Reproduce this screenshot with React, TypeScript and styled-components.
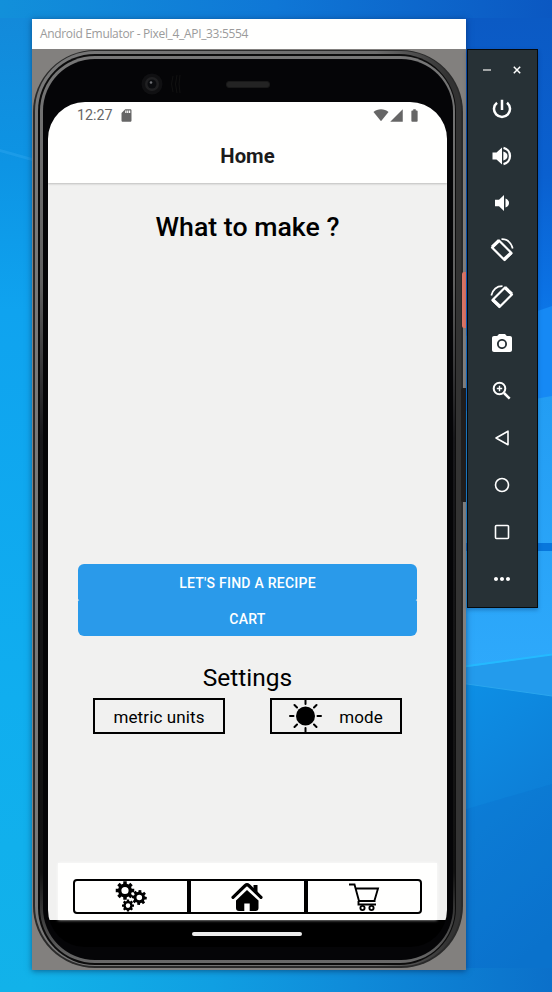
import React from "react";
import styled, { createGlobalStyle } from "styled-components";
import {
  MdPhotoCamera,
  MdMoreHoriz,
  MdSdCard,
  MdSignalCellular4Bar,
  MdBatteryFull,
} from "react-icons/md";

const GlobalStyle = createGlobalStyle`
  *, *::before, *::after { box-sizing: border-box; }
  body { margin: 0; font-family: Roboto, "Liberation Sans", sans-serif; }
  svg { display: block; flex: none; }
  button { font: inherit; margin: 0; padding: 0; }
`;

const Desktop = styled.div`
  position: relative;
  width: 552px;
  height: 992px;
  overflow: hidden;
  background: #0f84dc;
  display: flex;
  align-items: flex-start;
  padding: 19px 0 0 32px;
`;

const WallpaperArt = styled.svg`
  position: absolute;
  inset: 0;
`;

const EmulatorWindow = styled.section`
  position: relative;
  width: 434px;
  height: 951px;
  display: flex;
  flex-direction: column;
  box-shadow: 0 1px 6px rgba(0, 20, 60, 0.5);
`;

const TitleBar = styled.header`
  height: 30px;
  flex: none;
  background: #fffffe;
  color: #9b9b9b;
  font: 12px/30px "Open Sans", "Noto Sans", sans-serif;
  letter-spacing: -0.33px;
  padding-left: 8px;
  white-space: nowrap;
`;

const DeviceArea = styled.div`
  position: relative;
  flex: 1;
  background: #82807e;
  padding: 1px 3px 2px 1px;
  display: flex;
`;

const Bezel = styled.div<{ $pad: string; $radius: number; $bg: string }>`
  flex: 1;
  display: flex;
  padding: ${(p) => p.$pad};
  border-radius: ${(p) => p.$radius}px;
  background: ${(p) => p.$bg};
`;

const Glass = styled.div`
  flex: 1;
  display: flex;
  flex-direction: column;
  border-radius: 52px;
  background: #050507;
`;

const SensorStrip = styled.div`
  height: 43px;
  flex: none;
  display: flex;
  padding: 13px 0 0 98px;
  align-items: flex-start;
`;

const Speaker = styled.span`
  width: 44px;
  height: 7px;
  margin: 9px 0 0 43px;
  border-radius: 3px;
  background: #232323;
  border: 1px solid #191919;
`;

const Screen = styled.main`
  width: 399px;
  height: 845px;
  margin-left: 5px;
  border-radius: 37px;
  overflow: hidden;
  display: flex;
  flex-direction: column;
  background: #000;
`;

const AppHeader = styled.div`
  position: relative;
  height: 81px;
  flex: none;
  background: #fffffe;
  box-shadow: 0 1px 2px rgba(0, 0, 0, 0.22);
`;

const StatusBar = styled.div`
  height: 27px;
  display: flex;
  align-items: center;
  color: #666;
  font-size: 14.3px;
  padding: 0 25px 1px 29px;
`;

const StatusTime = styled.span`
  margin-right: 6px;
`;

const StatusRight = styled.div`
  margin-left: auto;
  display: flex;
  align-items: center;
`;

const BatterySlot = styled.span`
  margin-left: 3px;
`;

const HeaderTitle = styled.h1`
  margin: 0;
  height: 54px;
  text-align: center;
  font-size: 20.3px;
  line-height: 55px;
  font-weight: 700;
  color: #1b1b1c;
`;

const Page = styled.div`
  height: 737px;
  flex: none;
  display: flex;
  flex-direction: column;
  background: #f1f1f0;
`;

const Question = styled.h2`
  margin: 25px 0 0;
  height: 38px;
  font-size: 26.7px;
  line-height: 38px;
  font-weight: 500;
  text-align: center;
  color: #000;
`;

const ActionList = styled.div`
  margin: 318px 30px 0;
  display: flex;
  flex-direction: column;
`;

const ActionButton = styled.button<{ $edge: "top" | "bottom" }>`
  height: 36px;
  border: 0;
  border-radius: ${(p) => (p.$edge === "top" ? "6px 6px 1.5px 1.5px" : "1.5px 1.5px 6px 6px")};
  background: #2a9aea;
  color: #fff;
  font-size: 14px;
  font-weight: 500;
  letter-spacing: 0.24px;
  padding-top: ${(p) => (p.$edge === "top" ? 2 : 1)}px;
`;

const SettingsTitle = styled.h3`
  margin: 26px 0 0;
  height: 32px;
  line-height: 31px;
  font-size: 24.5px;
  font-weight: 400;
  text-align: center;
  color: #000;
`;

const SettingsRow = styled.div`
  display: flex;
  justify-content: space-between;
  margin: 4px 45px 0;
`;

const SettingButton = styled.button`
  width: 132px;
  height: 36px;
  border: 2px solid #000;
  background: transparent;
  color: #000;
  font-size: 17px;
  letter-spacing: 0.12px;
  padding-top: 1px;
  display: flex;
  align-items: center;
  justify-content: center;
  gap: 17px;

  svg {
    margin-top: -1px;
  }
`;

const TabPanel = styled.nav`
  margin: auto 10px 0;
  height: 57px;
  padding: 16px 15px 0;
  background: #fffffe;
  box-shadow: 0 0 3px rgba(255, 255, 255, 0.8);
  display: flex;
`;

const Tab = styled.button`
  flex: 1;
  height: 35px;
  border: 2px solid #000;
  background: #fffffe;
  display: flex;
  align-items: center;
  justify-content: center;

  &:first-child {
    border-radius: 4px 0 0 4px;
  }

  &:last-child {
    border-radius: 0 4px 4px 0;
  }
`;

const GestureBar = styled.div`
  flex: 1;
  display: flex;
  justify-content: center;
  padding: 12px 1px 0 0;
`;

const GesturePill = styled.span`
  width: 110px;
  height: 4px;
  border-radius: 2px;
  background: #ececec;
`;

const SideKey = styled.span<{ $top: number; $height: number; $color: string; $width: number }>`
  position: absolute;
  right: 0;
  top: ${(p) => p.$top}px;
  width: ${(p) => p.$width}px;
  height: ${(p) => p.$height}px;
  border-radius: 2px 0 0 2px;
  background: ${(p) => p.$color};
`;

const ControlPanel = styled.aside`
  position: relative;
  width: 71px;
  height: 559px;
  margin: 30px 0 0 1px;
  border: 1px solid #05090c;
  background: #273136;
  color: #fff;
  box-shadow: 0 2px 4px rgba(0, 30, 80, 0.3);
`;

const WindowButtons = styled.div`
  height: 35px;
  display: flex;
  align-items: center;
  justify-content: center;
  gap: 22px;
  padding: 5px 1px 0 0;
`;

const ControlList = styled.div`
  display: flex;
  flex-direction: column;
`;

const Control = styled.button`
  height: 47px;
  width: 67px;
  border: 0;
  background: transparent;
  color: #fff;
  display: flex;
  align-items: center;
  justify-content: center;
`;

function Wallpaper() {
  return (
    <WallpaperArt width="552" height="992" viewBox="0 0 552 992" aria-hidden="true">
      <defs>
        <linearGradient id="left" x1="0" y1="0" x2="0" y2="1">
          <stop offset="0" stopColor="#138ada" />
          <stop offset="0.15" stopColor="#0d94e4" />
          <stop offset="0.3" stopColor="#0fa3ef" />
          <stop offset="0.7" stopColor="#10aeef" />
          <stop offset="1" stopColor="#12b2e9" />
        </linearGradient>
        <linearGradient id="top" x1="0" y1="0" x2="1" y2="0">
          <stop offset="0" stopColor="#1290da" />
          <stop offset="0.5" stopColor="#0f77d6" />
          <stop offset="1" stopColor="#0b58c2" />
        </linearGradient>
        <linearGradient id="right" x1="0" y1="0" x2="0" y2="1">
          <stop offset="0" stopColor="#0b5ac4" />
          <stop offset="0.4" stopColor="#0a60cf" />
          <stop offset="0.7" stopColor="#0b72e4" />
          <stop offset="1" stopColor="#128af5" />
        </linearGradient>
        <linearGradient id="glow" x1="0" y1="0" x2="0" y2="1">
          <stop offset="0" stopColor="#239df3" />
          <stop offset="1" stopColor="#2ea9fb" />
        </linearGradient>
        <linearGradient id="lower" x1="0" y1="0" x2="0.25" y2="1">
          <stop offset="0" stopColor="#0d90e6" />
          <stop offset="0.5" stopColor="#0d80d8" />
          <stop offset="1" stopColor="#0b75ce" />
        </linearGradient>
        <linearGradient id="bottom" x1="0" y1="0" x2="1" y2="0">
          <stop offset="0" stopColor="#12b3e9" />
          <stop offset="0.35" stopColor="#109fe2" />
          <stop offset="0.62" stopColor="#0f8bd9" />
          <stop offset="1" stopColor="#0b70ca" />
        </linearGradient>
      </defs>
      <rect width="552" height="50" fill="url(#top)" />
      <rect y="18" width="60" height="974" fill="url(#left)" />
      <path d="M0 149L32 158V161L0 152Z" fill="#36adf0" opacity="0.35" />
      <rect x="466" y="18" width="86" height="392" fill="url(#right)" />
      <path d="M460 338L552 306V420H460Z" fill="#1689f4" />
      <path d="M460 412L552 396V670H460Z" fill="url(#glow)" />
      <rect x="460" y="543" width="92" height="8" fill="#0877dc" />
      <path d="M460 668L552 655V700H460Z" fill="#239bec" />
      <path d="M460 667L552 654.500" stroke="#24baff" strokeWidth="2" />
      <path d="M460 683L552 696V992H460Z" fill="url(#lower)" />
      <path d="M460 683L552 696" stroke="#2ba6ee" strokeWidth="1" />
      <path d="M460 811L552 784V970H460Z" fill="#0867c8" opacity="0.22" />
      <rect x="30" y="968" width="522" height="24" fill="url(#bottom)" />
    </WallpaperArt>
  );
}

function Camera() {
  return (
    <svg width="42" height="24" viewBox="0 0 42 24">
      <circle cx="11" cy="12" r="10.500" fill="#101012" />
      <circle cx="11" cy="12" r="7" fill="#202022" />
      <circle cx="11" cy="12" r="4.500" fill="#0b0c0f" />
      <circle cx="10" cy="10.500" r="1.300" fill="#707276" />
      <path d="M32 4Q29 12 32 20M36 3Q33 12 36 21M39 3Q37 12 39 21" fill="none" stroke="#111" />
    </svg>
  );
}

function WifiIcon() {
  return (
    <svg width="16" height="14" viewBox="0 0 16 14" fill="#666">
      <path d="M8 13.300L0.500 4C4.500 0.300 11.500 0.300 15.500 4Z" />
    </svg>
  );
}

function gearPath(cx: number, cy: number, outer: number, root: number, hole: number, teeth: number, turn: number) {
  const points: string[] = [];
  const step = (Math.PI * 2) / teeth;
  for (let i = 0; i < teeth; i++) {
    const base = turn + i * step;
    const corners: [number, number][] = [
      [-0.33, root],
      [-0.23, outer],
      [0.23, outer],
      [0.33, root],
    ];
    corners.forEach(([f, r]) => {
      const a = base + f * step;
      points.push(`${(cx + r * Math.cos(a)).toFixed(2)} ${(cy + r * Math.sin(a)).toFixed(2)}`);
    });
  }
  return `M${points.join("L")}ZM${cx - hole} ${cy}a${hole} ${hole} 0 1 0 ${hole * 2} 0a${hole} ${hole} 0 1 0 ${-hole * 2} 0Z`;
}

function GearsIcon() {
  return (
    <svg width="32" height="31" viewBox="0 0 32 31" fillRule="evenodd">
      <path d={gearPath(10, 9.5, 9.4, 7, 3.6, 8, 0)} />
      <path d={gearPath(24.3, 16.5, 7.6, 5.7, 2.8, 8, 0.1)} />
      <path d={gearPath(13, 24.6, 6.1, 4.7, 2.3, 8, 0)} />
    </svg>
  );
}

function HouseIcon() {
  return (
    <svg width="32" height="30" viewBox="0 0 32 30">
      <path d="M2 15.300L14.200 3.500Q16 2 17.800 3.500L30 15.300" fill="none" stroke="#000" strokeWidth="3.200" strokeLinecap="round" />
      <path d="M22.500 3H26.500V11L22.500 7Z" />
      <path d="M16 8L27.500 18.500V26Q27.500 29 24.500 29H18.700V21.500H13.300V29H8Q5 29 5 26V18.500Z" />
    </svg>
  );
}

function CartIcon() {
  return (
    <svg width="32" height="30" viewBox="0 0 32 30" fill="none" stroke="#000" strokeWidth="1.900">
      <path d="M1 2.500H6.500L11 19M7.300 6.500H30L26.500 18.500M10 19H27.500M10.500 19V22.500H28" />
      <circle cx="14.500" cy="26" r="2.100" />
      <circle cx="23.500" cy="26" r="2.100" />
    </svg>
  );
}

function SunIcon() {
  return (
    <svg width="33" height="32" viewBox="0 0 33 32" stroke="#000" strokeWidth="2" strokeLinecap="round">
      <circle cx="16.500" cy="16" r="9.500" stroke="none" />
      <path d="M16.500 0.500V4M16.500 28V31.500M1 16H4.500M28.500 16H32M5.500 5L8 7.500M27.500 5L25 7.500M5.500 27L8 24.500M27.500 27L25 24.500" />
    </svg>
  );
}

function PowerIcon() {
  return (
    <svg width="24" height="24" viewBox="0 0 24 24" fill="none" stroke="#fff" strokeWidth="2.500">
      <path d="M12 2.700V13M7 5.700A8 8 0 1 0 17 5.700" />
    </svg>
  );
}

function VolumeIcon({ loud = false }: { loud?: boolean }) {
  return (
    <svg width="24" height="24" viewBox="0 0 24 24" fill="#fff">
      {loud ? (
        <>
          <path d="M2.500 8.500H6.500L12 3.500V20.500L6.500 15.500H2.500Z" />
          <path d="M13.300 7.500Q17.500 8.800 17.500 12T13.300 16.500Z" />
          <path d="M13.500 3.900A8.300 8.300 0 0 1 13.500 20.100" fill="none" stroke="#fff" strokeWidth="2.300" />
        </>
      ) : (
        <>
          <path d="M5 8.800H9L14 4V20L9 15.200H5Z" />
          <path d="M15.500 7.500Q19 9 19 12T15.500 16.500Z" />
        </>
      )}
    </svg>
  );
}

function ZoomIcon() {
  return (
    <svg width="24" height="24" viewBox="0 0 24 24" fill="none" stroke="#fff">
      <circle cx="9.500" cy="9.500" r="5.800" strokeWidth="2" />
      <path d="M14 14L19.700 19.700" strokeWidth="2.500" />
      <path d="M9.500 6.800V12.200M6.800 9.500H12.200" strokeWidth="1.400" />
    </svg>
  );
}

function RotateIcon({ right = false }: { right?: boolean }) {
  return (
    <svg width="26" height="26" viewBox="0 0 26 26" fill="none" stroke="#fff">
      <g transform={right ? "translate(26 0) scale(-1 1)" : undefined}>
        <path d="M10 3.500L22.500 16L15.500 23L3 10.500Z" strokeWidth="2.200" strokeLinejoin="round" />
        <path d="M3.200 10L10 3.500M15 22.500L22.500 15.500" strokeWidth="3.200" />
        <path d="M12.500 2.200Q21 2 23.700 11.500" strokeWidth="1.700" />
      </g>
    </svg>
  );
}

function NavShape({ shape }: { shape: "back" | "home" | "recent" }) {
  return (
    <svg width="18" height="18" viewBox="0 0 18 18" fill="none" stroke="#fff" strokeWidth="1.600">
      {shape === "back" && <path d="M15 2.200V15.800L3 9Z" strokeLinejoin="round" />}
      {shape === "home" && <circle cx="9" cy="9" r="6.500" />}
      {shape === "recent" && <rect x="2.500" y="2.500" width="13" height="13" rx="1" />}
    </svg>
  );
}

const controls: { label: string; icon: React.ReactNode }[] = [
  { label: "Power", icon: <PowerIcon /> },
  { label: "Volume up", icon: <VolumeIcon loud /> },
  { label: "Volume down", icon: <VolumeIcon /> },
  { label: "Rotate left", icon: <RotateIcon /> },
  { label: "Rotate right", icon: <RotateIcon right /> },
  { label: "Screenshot", icon: <MdPhotoCamera size={24} /> },
  { label: "Zoom", icon: <ZoomIcon /> },
  { label: "Back", icon: <NavShape shape="back" /> },
  { label: "Home", icon: <NavShape shape="home" /> },
  { label: "Overview", icon: <NavShape shape="recent" /> },
  { label: "More", icon: <MdMoreHoriz size={24} /> },
];

function PhoneScreen() {
  return (
    <Screen>
      <AppHeader>
        <StatusBar>
          <StatusTime>12:27</StatusTime>
          <MdSdCard size={15} />
          <StatusRight>
            <WifiIcon />
            <MdSignalCellular4Bar size={15} />
            <BatterySlot>
              <MdBatteryFull size={15} />
            </BatterySlot>
          </StatusRight>
        </StatusBar>
        <HeaderTitle>Home</HeaderTitle>
      </AppHeader>
      <Page>
        <Question>What to make ?</Question>
        <ActionList>
          <ActionButton $edge="top">LET'S FIND A RECIPE</ActionButton>
          <ActionButton $edge="bottom">CART</ActionButton>
        </ActionList>
        <SettingsTitle>Settings</SettingsTitle>
        <SettingsRow>
          <SettingButton>metric units</SettingButton>
          <SettingButton>
            <SunIcon />
            mode
          </SettingButton>
        </SettingsRow>
        <TabPanel>
          <Tab aria-label="Settings"><GearsIcon /></Tab>
          <Tab aria-label="Home"><HouseIcon /></Tab>
          <Tab aria-label="Cart"><CartIcon /></Tab>
        </TabPanel>
      </Page>
      <GestureBar>
        <GesturePill />
      </GestureBar>
    </Screen>
  );
}

export default function App() {
  return (
    <>
      <GlobalStyle />
      <Desktop>
        <Wallpaper />
        <EmulatorWindow>
          <TitleBar>Android Emulator - Pixel_4_API_33:5554</TitleBar>
          <DeviceArea>
            <Bezel $pad="1px 2px 2px 2px" $radius={62} $bg="#2a2a2a">
              <Bezel $pad="3px 5px 1px 3px" $radius={60} $bg="linear-gradient(90deg, #787878 0%, #6c6c6c 80%, #333 97%)">
                <Bezel $pad="2px 1px 2px 2px" $radius={57} $bg="#0c0c0c">
                  <Bezel $pad="3px 2px 3px 3px" $radius={55} $bg="linear-gradient(180deg, #777 0%, #606060 25%, #17171a 42%, #111 90%, #6a6a6a 100%)">
                    <Glass>
                      <SensorStrip>
                        <Camera />
                        <Speaker />
                      </SensorStrip>
                      <PhoneScreen />
                    </Glass>
                  </Bezel>
                </Bezel>
              </Bezel>
            </Bezel>
            <SideKey $top={223} $height={56} $width={4} $color="#dc7464" />
            <SideKey $top={339} $height={114} $width={5} $color="#211e1d" />
          </DeviceArea>
        </EmulatorWindow>
        <ControlPanel>
          <WindowButtons>
            <svg width="8" height="8" viewBox="0 0 8 8"><path d="M0 4H8" stroke="#ccc" strokeWidth="1.500" /></svg>
            <svg width="8" height="8" viewBox="0 0 8 8"><path d="M0.800 0.800L7.200 7.200M7.200 0.800L0.800 7.200" stroke="#fff" strokeWidth="1.500" /></svg>
          </WindowButtons>
          <ControlList>
            {controls.map((c) => (
              <Control key={c.label} aria-label={c.label}>{c.icon}</Control>
            ))}
          </ControlList>
        </ControlPanel>
      </Desktop>
    </>
  );
}
